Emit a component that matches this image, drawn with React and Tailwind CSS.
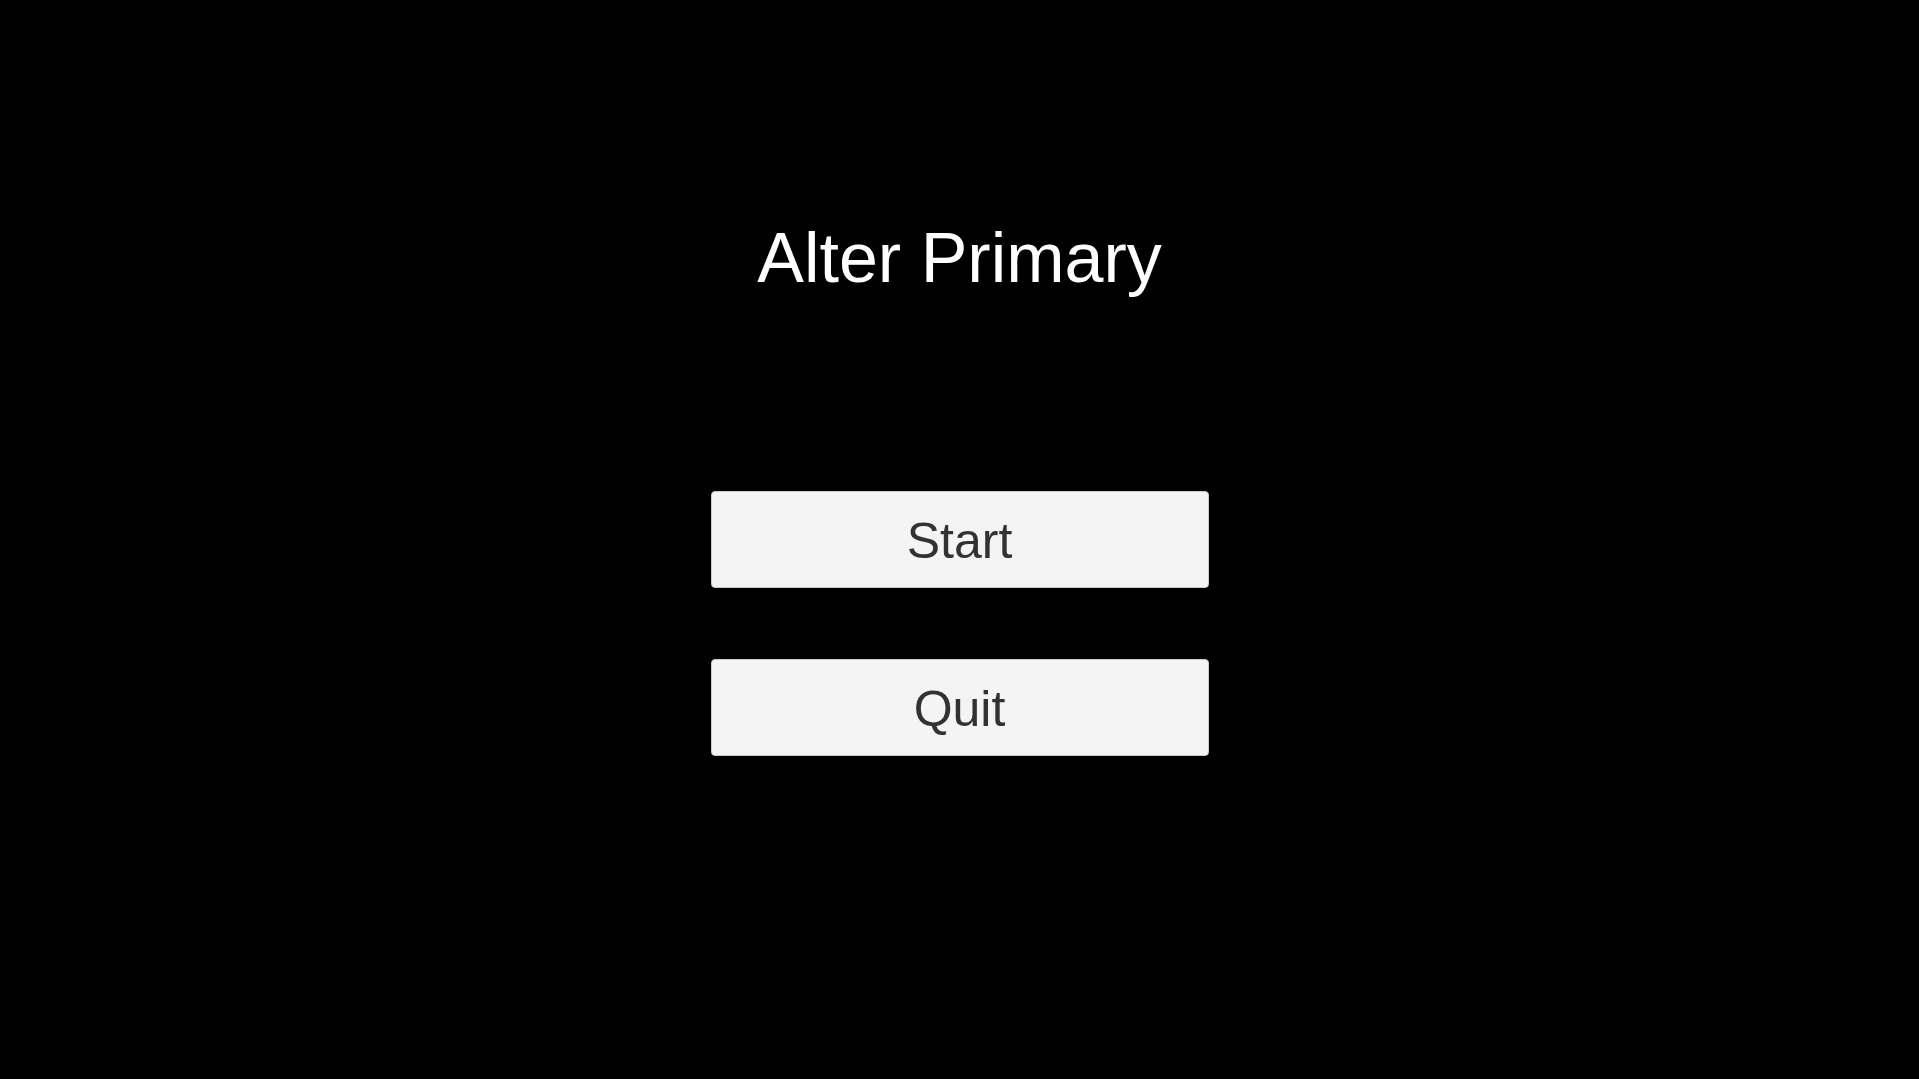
// App.jsx
const buttons = ['Start', 'Quit']

export default function App() {
  return (
    <div className="w-full h-screen bg-black flex flex-col items-center overflow-hidden" style={{ fontFamily: '"Liberation Sans", Arial, sans-serif' }}>
      {/* Title */}
      <h1 className="mt-[223px] text-[70px] leading-none text-white font-normal">Alter Primary</h1>

      {/* Menu buttons */}
      <div className="mt-[198px] flex flex-col gap-[71px]">
        {buttons.map(label => (
          <button key={label}
            className="w-[498px] h-[97px] bg-[#f4f4f4] border border-[#c9c9c9] rounded-[4px] flex items-center justify-center pt-[2px] text-[50px] leading-none text-[#323232]">
            {label}
          </button>
        ))}
      </div>
    </div>
  )
}
